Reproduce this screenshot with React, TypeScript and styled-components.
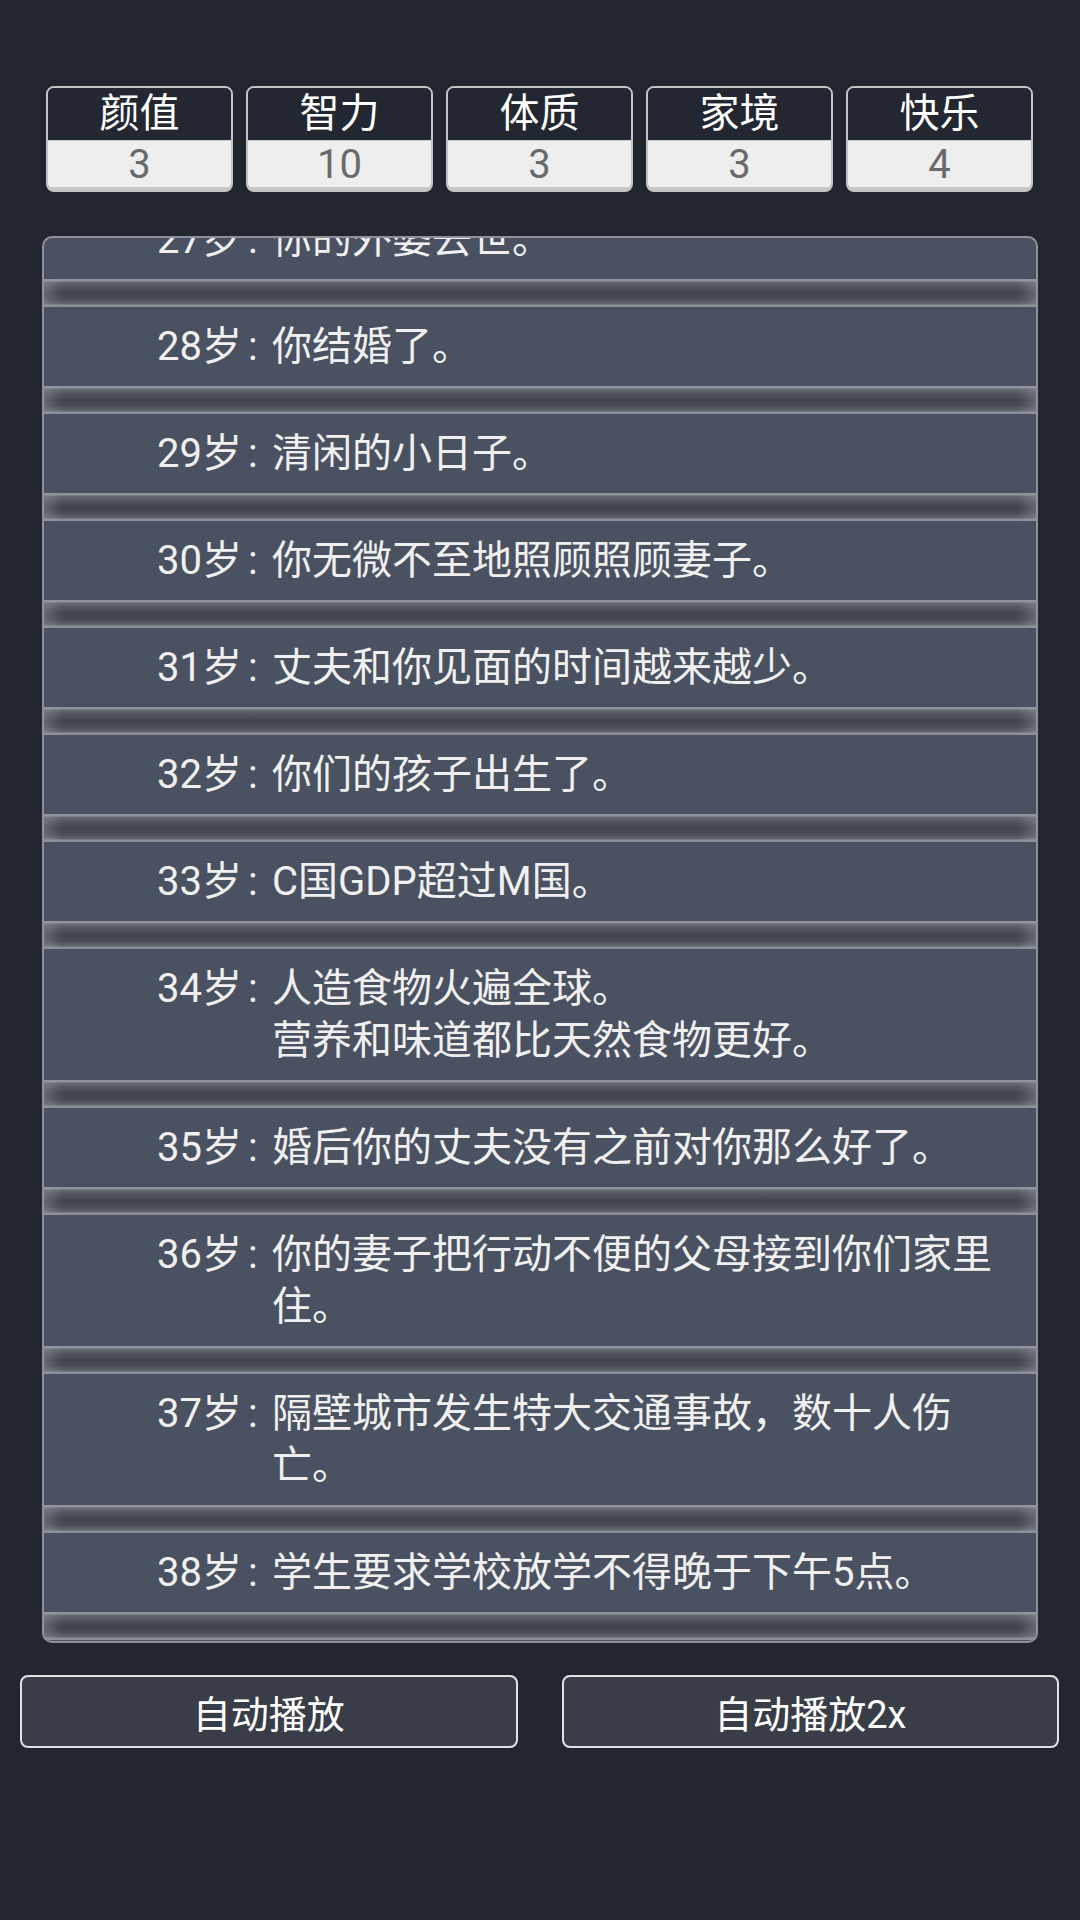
import styled, { createGlobalStyle } from "styled-components";
import { FC } from "react";

const GlobalStyle = createGlobalStyle`
  html, body {
    margin: 0;
    padding: 0;
    background: #21262f;
  }
  body {
    font-family: Roboto, "Noto Sans CJK SC", sans-serif;
  }
`;

type Attr = { name: string; value: number };
type Event = { age: number; text: string };

const attrs: Attr[] = [
  { name: "颜值", value: 3 },
  { name: "智力", value: 10 },
  { name: "体质", value: 3 },
  { name: "家境", value: 3 },
  { name: "快乐", value: 4 },
];

const events: Event[] = [
  { age: 27, text: "你的外婆去世。" },
  { age: 28, text: "你结婚了。" },
  { age: 29, text: "清闲的小日子。" },
  { age: 30, text: "你无微不至地照顾照顾妻子。" },
  { age: 31, text: "丈夫和你见面的时间越来越少。" },
  { age: 32, text: "你们的孩子出生了。" },
  { age: 33, text: "C国GDP超过M国。" },
  { age: 34, text: "人造食物火遍全球。\n营养和味道都比天然食物更好。" },
  { age: 35, text: "婚后你的丈夫没有之前对你那么好了。" },
  { age: 36, text: "你的妻子把行动不便的父母接到你们家里住。" },
  { age: 37, text: "隔壁城市发生特大交通事故，数十人伤亡。" },
  { age: 38, text: "学生要求学校放学不得晚于下午5点。" },
];

const Page = styled.div`
  width: 1080px;
  height: 1920px;
  box-sizing: border-box;
  padding-top: 86px;
  display: flex;
  flex-direction: column;
  color: #f2f2f2;
`;

const Stats = styled.div`
  display: grid;
  grid-template-columns: repeat(5, 1fr);
  gap: 13px;
  margin: 0 47px 0 46px;
  height: 106px;
`;

const Stat = styled.div`
  display: flex;
  flex-direction: column;
  border: 2px solid #c4c4c4;
  border-radius: 8px;
  overflow: hidden;
`;

const StatName = styled.div`
  height: 52px;
  line-height: 52px;
  text-align: center;
  font-size: 40px;
  color: #ffffff;
  background: #222731;
`;

const StatValue = styled.div`
  flex: 1;
  line-height: 48px;
  text-align: center;
  font-size: 40px;
  color: #6a6a6a;
  background: #eeeeee;
  border-top: 1px solid #cfcfcf;
  box-shadow: inset 0 -3px 0 #c9c9c9;
`;

const Log = styled.div`
  margin: 44px 42px 0;
  height: 1407px;
  box-sizing: border-box;
  border: 2px solid #8e9198;
  border-radius: 10px;
  background: #4a5262;
  overflow: hidden;
`;

// list is scrolled a little, so the first entry is cut by the top edge
const List = styled.ul`
  list-style: none;
  margin: -38px 0 0;
  padding: 0;
`;

// the sunken groove under every entry
const Entry = styled.li`
  &::after {
    content: "";
    display: block;
    height: 28px;
    background:
      linear-gradient(
        to right,
        rgba(150, 155, 165, 0.4),
        rgba(150, 155, 165, 0) 18px,
        rgba(150, 155, 165, 0) calc(100% - 18px),
        rgba(150, 155, 165, 0.4)
      ),
      linear-gradient(
        to bottom,
        #8e939b 0,
        #8e939b 2px,
        #656972 3px,
        #50545d 8px,
        #40444d 14px,
        #484c55 20px,
        #62666f 25px,
        #8a8e96 26px,
        #8a8e96 28px
      );
  }
`;

const Line = styled.div`
  display: flex;
  padding: 13.5px 30px 13.5px 113px;
  font-size: 40px;
  line-height: 52px;
  color: #f0f0f0;
`;

const Age = styled.span`
  flex: none;
  white-space: nowrap;
`;

const Colon = styled.span`
  flex: none;
  width: 24px;
  padding-left: 6px;
`;

const Text = styled.span`
  flex: 1;
  min-width: 0;
  white-space: pre-wrap;
`;

const Controls = styled.div`
  display: grid;
  grid-template-columns: 1fr 1fr;
  gap: 44px;
  margin: 32px 21px 0 20px;
`;

const Button = styled.button`
  height: 73px;
  padding: 0;
  border: 2px solid #e2e2e2;
  border-radius: 8px;
  background: #393d47;
  color: #ffffff;
  font-family: Roboto, "Noto Sans CJK SC", sans-serif;
  font-size: 38px;
  cursor: pointer;
`;

const EventRow: FC<{ event: Event }> = ({ event }) => (
  <Entry>
    <Line>
      <Age>{event.age}岁</Age>
      <Colon>:</Colon>
      <Text>{event.text}</Text>
    </Line>
  </Entry>
);

export default function App() {
  return (
    <>
      <GlobalStyle />
      <Page>
        <Stats>
          {attrs.map((a) => (
            <Stat key={a.name}>
              <StatName>{a.name}</StatName>
              <StatValue>{a.value}</StatValue>
            </Stat>
          ))}
        </Stats>
        <Log>
          <List>
            {events.map((e) => (
              <EventRow key={e.age} event={e} />
            ))}
          </List>
        </Log>
        <Controls>
          <Button>自动播放</Button>
          <Button>自动播放2x</Button>
        </Controls>
      </Page>
    </>
  );
}
